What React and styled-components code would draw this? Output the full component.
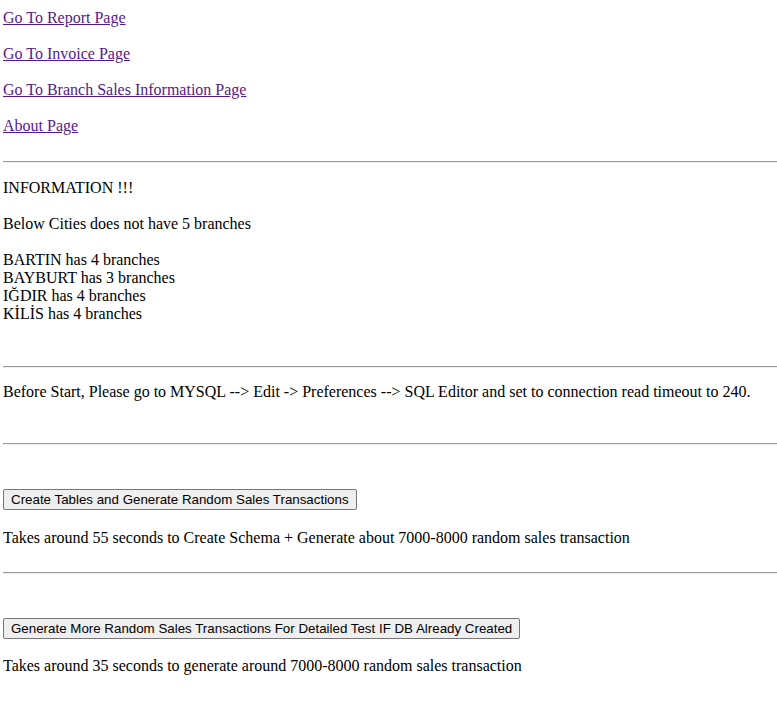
import styled, { createGlobalStyle } from 'styled-components'

const GlobalStyle = createGlobalStyle`
	html, body {
		margin: 0;
		padding: 0;
		background: #ffffff;
	}
`

const Page = styled.div`
	display: flex;
	flex-direction: column;
	align-items: flex-start;
	padding: 9px 0 20px 3px;
	font-family: 'Liberation Serif', 'Times New Roman', serif;
	font-size: 16px;
	line-height: 18px;
	color: #000000;
`

const NavList = styled.nav`
	display: flex;
	flex-direction: column;
	gap: 18px;
`

const NavLink = styled.a`
	color: #551a8b;
	text-decoration: underline;
	cursor: pointer;
`

const Rule = styled.hr`
	align-self: stretch;
	height: 0;
	margin: ${(p) => p.$top}px 0 0;
	border: none;
	border-top: 1px solid #9a9a9a;
	border-bottom: 1px solid #eeeeee;
`

const Text = styled.p`
	margin: ${(p) => p.$top}px 0 0;
	white-space: nowrap;
`

const CityList = styled.div`
	display: flex;
	flex-direction: column;
	margin-top: ${(p) => p.$top}px;
`

const ActionButton = styled.button`
	margin-top: ${(p) => p.$top}px;
	height: 21px;
	padding: 0 7px;
	font-family: 'Liberation Sans', Arial, sans-serif;
	font-size: 13.333px;
	color: #000000;
	background: #efefef;
	border: 1px solid #767676;
	border-radius: 2px;
	cursor: pointer;
`

const links = ['Go To Report Page', 'Go To Invoice Page', 'Go To Branch Sales Information Page', 'About Page']

const cities = [
	{ name: 'BARTIN', count: 4 },
	{ name: 'BAYBURT', count: 3 },
	{ name: 'IĞDIR', count: 4 },
	{ name: 'KİLİS', count: 4 },
]

export default function App() {
	return (
		<>
			<GlobalStyle />
			<Page>
				<NavList>
					{links.map((label) => (
						<NavLink key={label} href="#">
							{label}
						</NavLink>
					))}
				</NavList>

				<Rule $top={26} />
				<Text $top={16}>INFORMATION !!!</Text>
				<Text $top={18}>Below Cities does not have 5 branches</Text>
				<CityList $top={18}>
					{cities.map((c) => (
						<span key={c.name}>
							{c.name} has {c.count} branches
						</span>
					))}
				</CityList>

				<Rule $top={43} />
				<Text $top={15}>
					Before Start, Please go to MYSQL --&gt; Edit -&gt; Preferences --&gt; SQL Editor and set to connection read timeout to 240.
				</Text>

				<Rule $top={42} />
				<ActionButton $top={44}>Create Tables and Generate Random Sales Transactions</ActionButton>
				<Text $top={19}>Takes around 55 seconds to Create Schema + Generate about 7000-8000 random sales transaction</Text>

				<Rule $top={25} />
				<ActionButton $top={44}>Generate More Random Sales Transactions For Detailed Test IF DB Already Created</ActionButton>
				<Text $top={18}>Takes around 35 seconds to generate around 7000-8000 random sales transaction</Text>
			</Page>
		</>
	)
}
